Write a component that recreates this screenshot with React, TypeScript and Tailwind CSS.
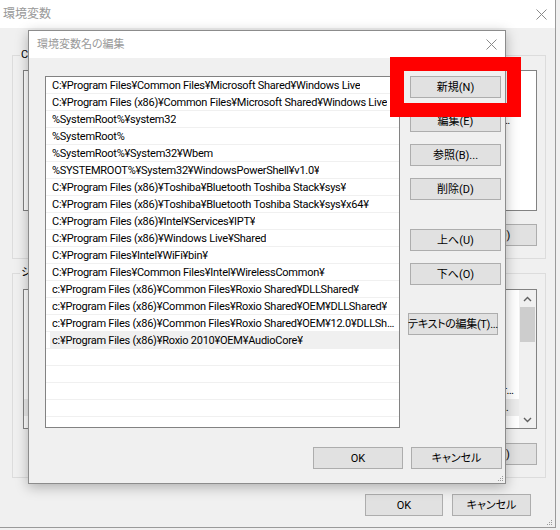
import clsx from "clsx";

const paths = [
  "C:¥Program Files¥Common Files¥Microsoft Shared¥Windows Live",
  "C:¥Program Files (x86)¥Common Files¥Microsoft Shared¥Windows Live",
  "%SystemRoot%¥system32",
  "%SystemRoot%",
  "%SystemRoot%¥System32¥Wbem",
  "%SYSTEMROOT%¥System32¥WindowsPowerShell¥v1.0¥",
  "C:¥Program Files (x86)¥Toshiba¥Bluetooth Toshiba Stack¥sys¥",
  "C:¥Program Files (x86)¥Toshiba¥Bluetooth Toshiba Stack¥sys¥x64¥",
  "C:¥Program Files (x86)¥Intel¥Services¥IPT¥",
  "C:¥Program Files (x86)¥Windows Live¥Shared",
  "C:¥Program Files¥Intel¥WiFi¥bin¥",
  "C:¥Program Files¥Common Files¥Intel¥WirelessCommon¥",
  "c:¥Program Files (x86)¥Common Files¥Roxio Shared¥DLLShared¥",
  "c:¥Program Files (x86)¥Common Files¥Roxio Shared¥OEM¥DLLShared¥",
  "c:¥Program Files (x86)¥Common Files¥Roxio Shared¥OEM¥12.0¥DLLShared¥",
  "c:¥Program Files (x86)¥Roxio 2010¥OEM¥AudioCore¥",
];

const userVars = [
  ["OneDrive", "C:¥Users¥CF¥OneDrive"],
  ["Path", "C:¥Users¥CF¥AppData¥Local¥Microsoft¥WindowsApps;C:¥Users¥CF¥AppData¥Local¥Programs¥Microsoft VS Code¥bin;"],
  ["TEMP", "C:¥Users¥CF¥AppData¥Local¥Temp"],
  ["TMP", "C:¥Users¥CF¥AppData¥Local¥Temp"],
];

const sysVars = [
  ["ComSpec", "C:¥WINDOWS¥system32¥cmd.exe"],
  ["DriverData", "C:¥Windows¥System32¥Drivers¥DriverData"],
  ["NUMBER_OF_PROCESSORS", "4"],
  ["OS", "Windows_NT"],
  ["Path", "C:¥Program Files¥Common Files¥Microsoft Shared¥Windows Live;C:¥Program Files (x86)¥Common Files¥Microsoft Shared;"],
  ["PATHEXT", ".COM;.EXE;.BAT;.CMD;.VBS;.VBE;.JS;.JSE;.WSF;.WSH;.MSC;.PY;.PYW;.CPL;.RB;.RBW;.TCL;.TCLSH"],
  ["PROCESSOR_ARCHITECTURE", "AMD64"],
];

function Btn({ children, className }: { children: React.ReactNode; className?: string }) {
  return (
    <button
      type="button"
      className={clsx(
        "h-[22px] shrink-0 bg-[#e1e1e1] border border-[#adadad] flex items-center justify-center text-[11px] text-black leading-none whitespace-nowrap",
        className
      )}
    >
      {children}
    </button>
  );
}

function CloseX() {
  return (
    <svg width="11" height="11" viewBox="0 0 11 11">
      <path d="M0.5 0.5L10.5 10.5M10.5 0.5L0.5 10.5" stroke="#8a8a8a" strokeWidth="1" fill="none" />
    </svg>
  );
}

function Grip() {
  return (
    <svg width="7" height="7" viewBox="0 0 7 7">
      <rect x="5" y="1" width="1" height="1" fill="#9a9a9a" />
      <rect x="3" y="3" width="1" height="1" fill="#9a9a9a" />
      <rect x="5" y="3" width="1" height="1" fill="#9a9a9a" />
      <rect x="1" y="5" width="1" height="1" fill="#9a9a9a" />
      <rect x="3" y="5" width="1" height="1" fill="#9a9a9a" />
      <rect x="5" y="5" width="1" height="1" fill="#9a9a9a" />
    </svg>
  );
}

function VarList({ rows, selected, scroll }: { rows: string[][]; selected?: number; scroll?: boolean }) {
  return (
    <div className="flex bg-white border border-[#828282] h-full overflow-hidden">
      <div className="flex-1 min-w-0 flex flex-col">
        <div className="h-[24px] shrink-0 flex items-center text-[11px] text-[#333]">
          <div className="w-[126px] pl-[6px] border-r border-[#e5e5e5] h-full flex items-center">変数</div>
          <div className="pl-[6px]">値</div>
        </div>
        {rows.map((r, i) => (
          <div
            key={i}
            className={clsx(
              "h-[17px] shrink-0 flex items-center text-[11px] leading-none tracking-[-0.25px] text-black",
              i === selected && "bg-[#ececec]"
            )}
          >
            <div className="w-[126px] pl-[6px] truncate">{r[0]}</div>
            <div className="w-[364px] pl-[6px] truncate">{r[1]}</div>
          </div>
        ))}
      </div>
      {scroll && (
        <div className="w-[17px] bg-[#f0f0f0] flex flex-col items-center">
          <div className="h-[17px] flex items-center justify-center">
            <svg width="9" height="6" viewBox="0 0 9 6">
              <path d="M1 5L4.5 1.5L8 5" stroke="#606060" strokeWidth="1.4" fill="none" />
            </svg>
          </div>
          <div className="w-[15px] h-[35px] bg-[#cdcdcd]" />
          <div className="flex-1" />
          <div className="h-[17px] flex items-center justify-center">
            <svg width="9" height="6" viewBox="0 0 9 6">
              <path d="M1 1L4.5 4.5L8 1" stroke="#606060" strokeWidth="1.4" fill="none" />
            </svg>
          </div>
        </div>
      )}
    </div>
  );
}

export default function App() {
  return (
    <div className="relative w-[560px] h-[530px] overflow-hidden bg-[#f0f0f0] font-['Roboto','Noto_Sans_CJK_JP',sans-serif] [font-feature-settings:'palt']">
      {/* 環境変数 window (behind) */}
      <div className="w-[556px] h-[528px] bg-[#f0f0f0] border-r border-b border-[#9a9a9a] flex flex-col">
        <div className="h-[28px] shrink-0 bg-white flex items-center justify-between pl-[3px] pr-[8px]">
          <span className="text-[12px] leading-none text-[#999]">環境変数</span>
          <CloseX />
        </div>

        <div className="pl-[12px] pt-[27px] flex flex-col">
          <div className="relative w-[534px] h-[204px] border border-[#dcdcdc] pt-[14px] pl-[10px]">
            <span className="absolute -top-[7px] left-[7px] bg-[#f0f0f0] px-[1px] text-[11px] leading-none text-black">
              CF のユーザー環境変数(U)
            </span>
            <div className="w-[514px] h-[141px]">
              <VarList rows={userVars} />
            </div>
            <div className="w-[514px] mt-[13px] flex justify-end gap-[10px]">
              <Btn className="w-[90px]">新規(N)...</Btn>
              <Btn className="w-[90px]">編集(E)...</Btn>
              <Btn className="w-[90px]">削除(D)</Btn>
            </div>
          </div>

          <div className="relative w-[534px] h-[205px] mt-[14px] border border-[#dcdcdc] pt-[15px] pl-[10px]">
            <span className="absolute -top-[7px] left-[7px] bg-[#f0f0f0] px-[1px] text-[11px] leading-none text-black">
              システム環境変数(S)
            </span>
            <div className="w-[514px] h-[140px]">
              <VarList rows={sysVars} selected={5} scroll />
            </div>
            <div className="w-[514px] mt-[14px] flex justify-end gap-[10px]">
              <Btn className="w-[90px]">新規(W)...</Btn>
              <Btn className="w-[90px]">編集(I)...</Btn>
              <Btn className="w-[90px]">削除(L)</Btn>
            </div>
          </div>

          <div className="w-[519px] mt-[16px] flex justify-end gap-[9px]">
            <Btn className="w-[78px]">OK</Btn>
            <Btn className="w-[79px]">キャンセル</Btn>
          </div>
        </div>
        <div className="flex-1 flex items-end justify-end pr-[2px] pb-[1px]">
          <Grip />
        </div>
      </div>

      {/* 環境変数名の編集 dialog (front) */}
      <div className="absolute left-[28px] top-[30px] w-[478px] h-[454px] bg-[#f0f0f0] border border-[#8c8c8c] shadow-[0_3px_12px_rgba(0,0,0,0.28)] flex flex-col">
        <div className="h-[27px] shrink-0 bg-white flex items-center justify-between pl-[8px] pr-[8px]">
          <span className="text-[11px] leading-none text-[#999]">環境変数名の編集</span>
          <CloseX />
        </div>

        <div className="flex pl-[16px] pt-[18px]">
          <div className="w-[355px] h-[352px] shrink-0 bg-white border border-[#828282] overflow-hidden">
            {paths.map((p, i) => (
              <div key={i} className="h-[17px] border-b border-[#f0f0f0] flex">
                <div
                  className={clsx(
                    "ml-[4px] flex-1 min-w-0 pl-[2px] pr-[2px] flex items-center text-[11px] leading-none tracking-[-0.25px] text-black",
                    i === 15 && "bg-[#f0f0f0]"
                  )}
                >
                  <span className="truncate">{p}</span>
                </div>
              </div>
            ))}
            {[0, 1, 2, 3].map((i) => (
              <div key={i} className="h-[17px] border-b border-[#f0f0f0]" />
            ))}
          </div>

          <div className="ml-[10px] flex flex-col">
            <Btn className="w-[91px]">新規(N)</Btn>
            <Btn className="w-[91px] mt-[12px]">編集(E)</Btn>
            <Btn className="w-[91px] mt-[12px]">参照(B)...</Btn>
            <Btn className="w-[91px] mt-[12px]">削除(D)</Btn>
            <Btn className="w-[91px] mt-[29px]">上へ(U)</Btn>
            <Btn className="w-[91px] mt-[12px]">下へ(O)</Btn>
            <Btn className="w-[90px] mt-[28px] -ml-[2px] tracking-[-0.3px]">テキストの編集(T)...</Btn>
          </div>
        </div>

        <div className="flex justify-end gap-[8px] pr-[3px] mt-[19px]">
          <Btn className="w-[90px]">OK</Btn>
          <Btn className="w-[91px]">キャンセル</Btn>
        </div>
        <div className="flex-1 flex items-end justify-end pr-[1px] pb-[1px]">
          <Grip />
        </div>
      </div>

      {/* red highlight */}
      <div className="absolute left-[390px] top-[57px] w-[131px] h-[60px] border-[14px] border-[#ff0000]" />
    </div>
  );
}
